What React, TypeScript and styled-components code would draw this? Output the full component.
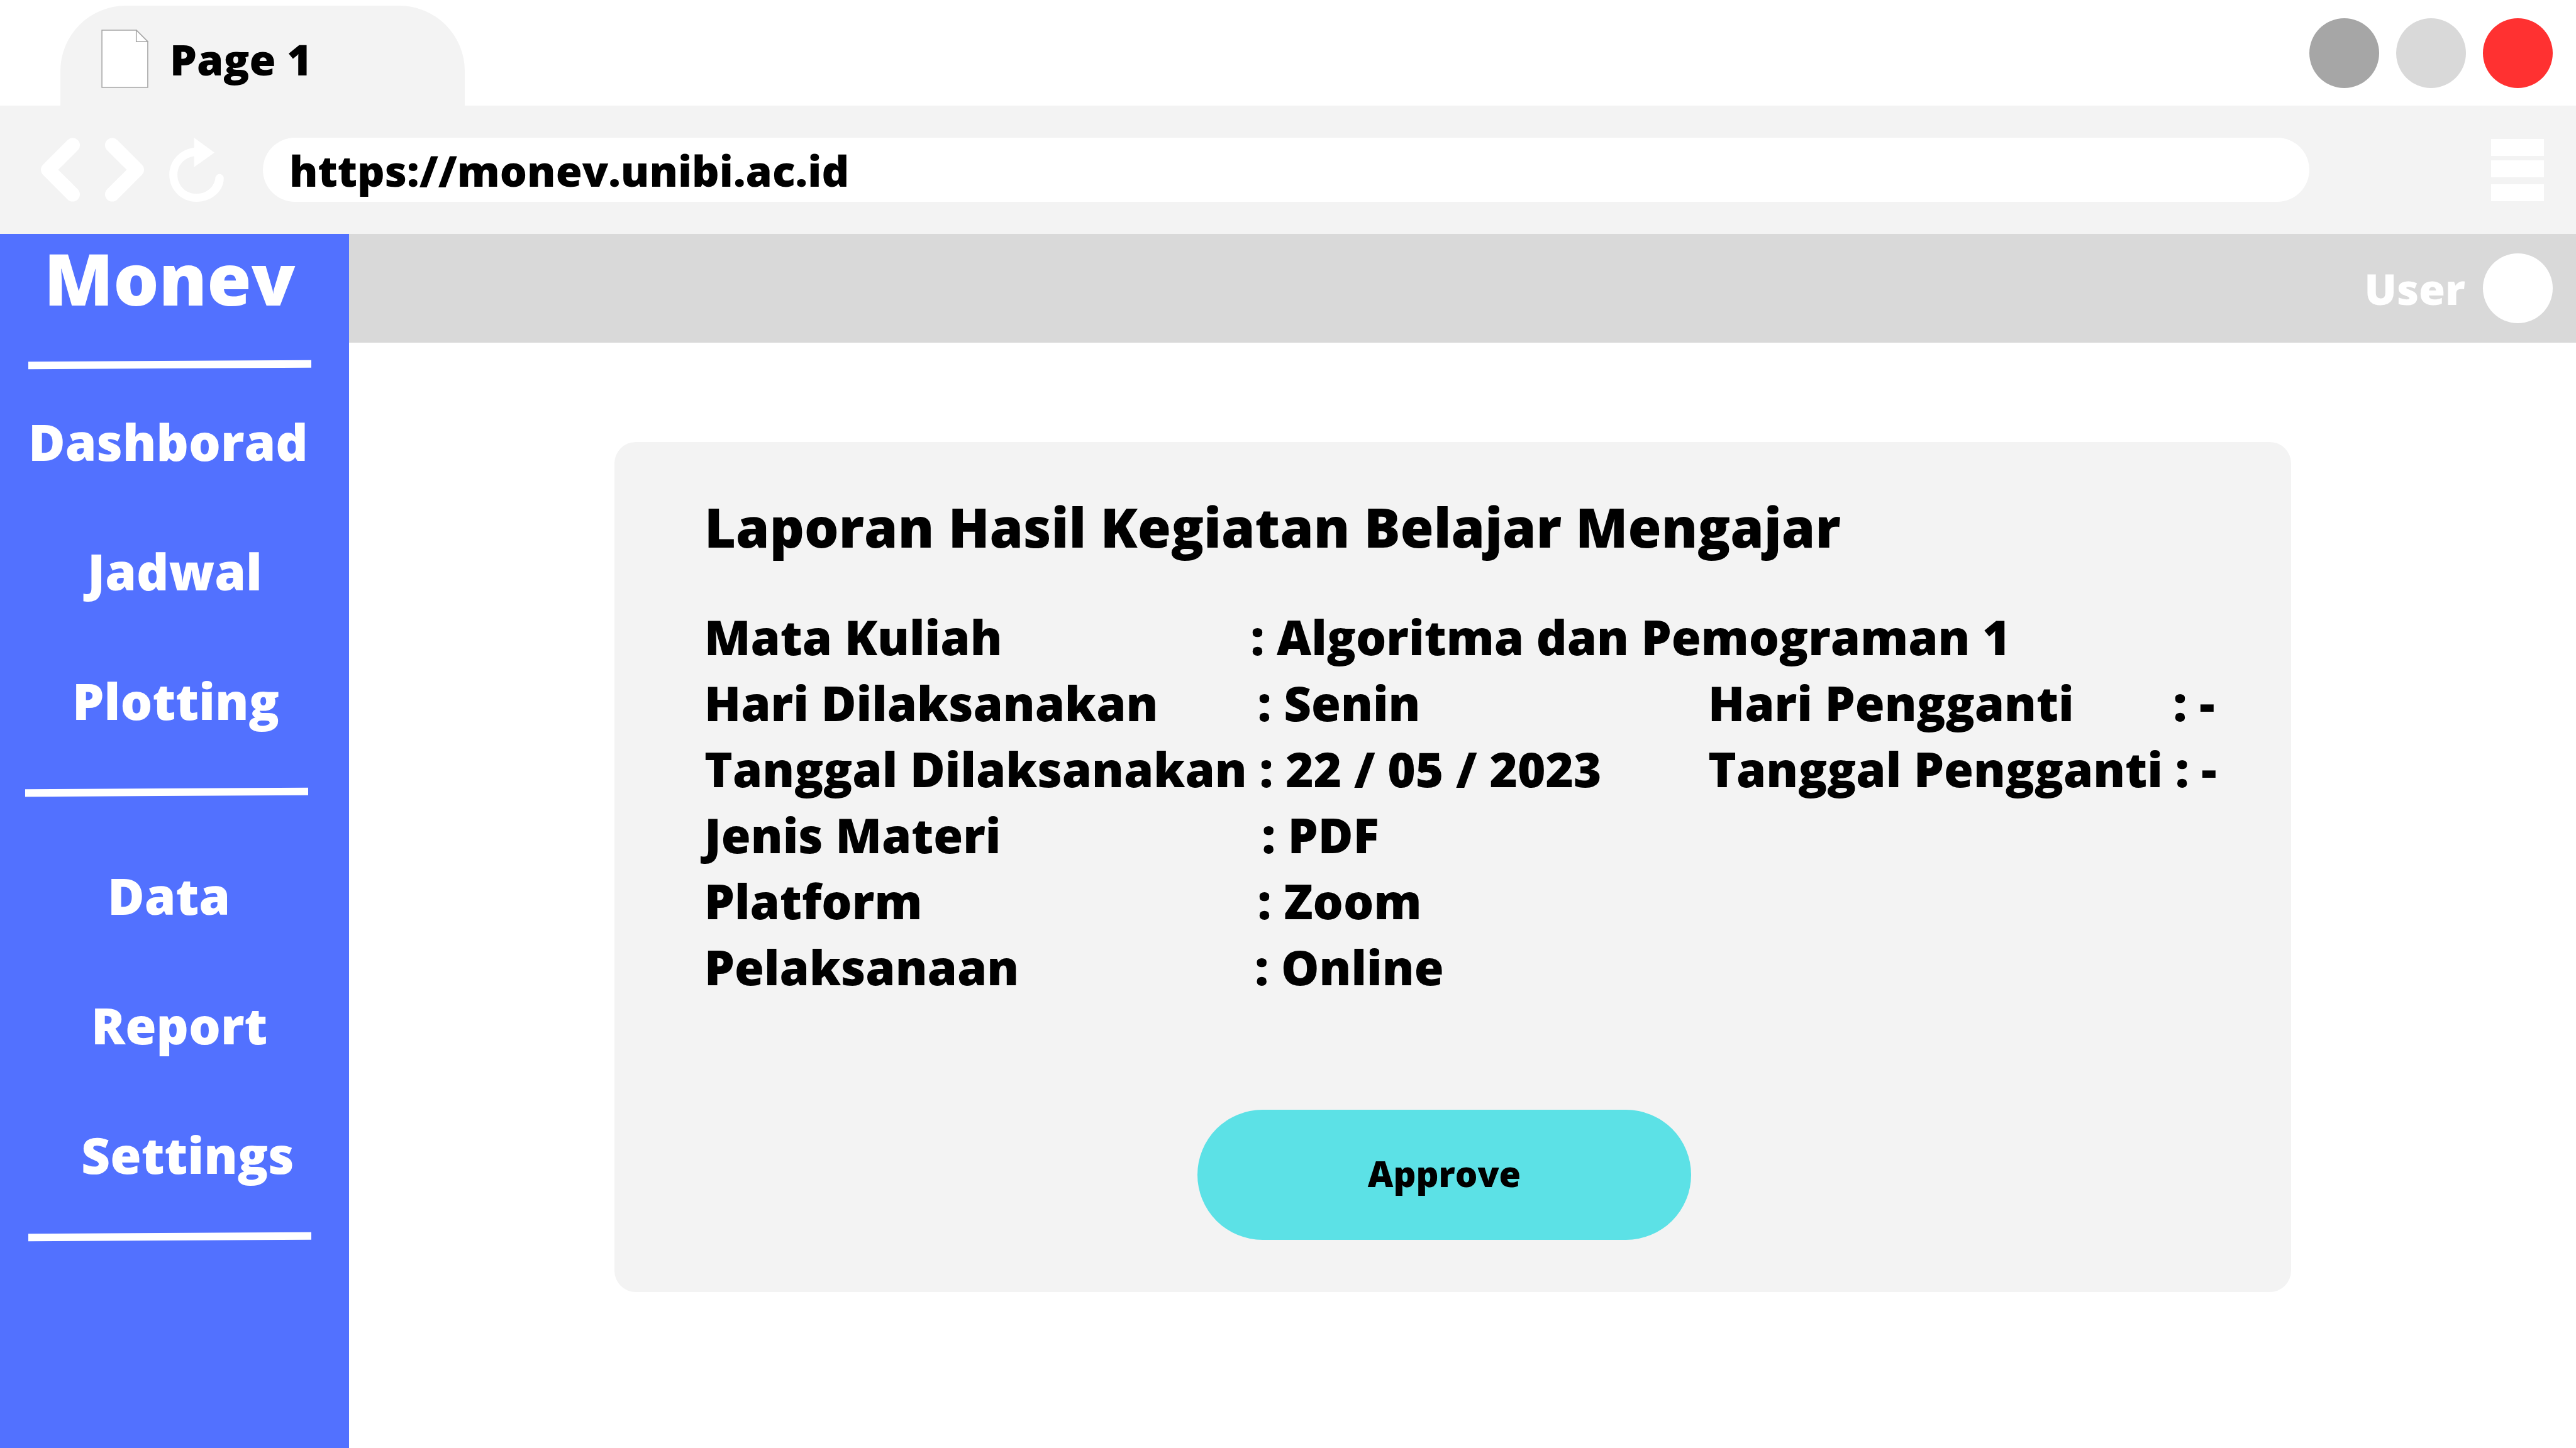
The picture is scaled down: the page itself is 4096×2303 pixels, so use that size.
import React from "react";
import styled, { createGlobalStyle } from "styled-components";

const GlobalStyle = createGlobalStyle`
  *, *::before, *::after { box-sizing: border-box; }
  body {
    margin: 0;
    background: #ffffff;
    font-family: "Open Sans", "Noto Sans", sans-serif;
    font-weight: 800;
    color: #000000;
  }
  button, input { font: inherit; color: inherit; }
`;

const Browser = styled.div`
  display: flex;
  flex-direction: column;
  min-height: 100vh;
`;

const TabStrip = styled.div`
  display: flex;
  justify-content: space-between;
  height: 168px;
  padding: 9px 37px 0 96px;
`;

const Tab = styled.div`
  display: flex;
  align-items: center;
  gap: 34px;
  width: 643px;
  padding: 10px 65px 0;
  border-radius: 104px 104px 0 0;
  background: #f3f3f3;
  font-size: 68px;
  line-height: 96px;
`;

const WindowControls = styled.div`
  display: flex;
  gap: 27px;
  padding-top: 20px;
`;

const WindowDot = styled.button<{ $color: string }>`
  width: 111px;
  height: 111px;
  padding: 0;
  border: 0;
  border-radius: 50%;
  background: ${(p) => p.$color};
`;

const Toolbar = styled.div`
  display: flex;
  align-items: center;
  height: 204px;
  padding: 0 51px 0 65px;
  background: #f3f3f3;
`;

const NavButtons = styled.div`
  display: flex;
  gap: 40px;
  margin-right: 62px;
`;

const IconButton = styled.button`
  display: flex;
  padding: 0;
  border: 0;
  background: none;
`;

const AddressBar = styled.input`
  flex: 1;
  min-width: 0;
  height: 102px;
  margin-right: 289px;
  padding: 0 42px;
  border: 0;
  border-radius: 51px;
  background: #ffffff;
  font-size: 68px;
  line-height: 96px;
`;

const Body = styled.div`
  display: flex;
  flex: 1;
`;

const Sidebar = styled.aside`
  flex: none;
  width: 555px;
  background: #5271ff;
  color: #ffffff;
`;

const Brand = styled.div`
  padding-left: 70px;
  font-size: 114px;
  line-height: 140px;
`;

const Divider = styled.hr<{ $indent: number; $above: number; $below: number }>`
  width: 450px;
  height: 12px;
  margin: ${(p) => p.$above}px 0 ${(p) => p.$below}px ${(p) => p.$indent}px;
  border: 0;
  background: #ffffff;
  transform: rotate(-0.3deg);
`;

const Menu = styled.ul`
  display: flex;
  flex-direction: column;
  gap: 94px;
  margin: 0;
  padding: 0;
  list-style: none;
`;

const MenuItem = styled.li<{ $indent: number }>`
  padding-left: ${(p) => p.$indent}px;
  font-size: 80px;
  line-height: 112px;
`;

const MenuLink = styled.a`
  color: inherit;
  text-decoration: none;
`;

const Content = styled.div`
  flex: 1;
  min-width: 0;
`;

const Header = styled.header`
  display: flex;
  align-items: center;
  justify-content: flex-end;
  gap: 28px;
  height: 173px;
  padding-right: 37px;
  background: #d9d9d9;
  color: #ffffff;
  font-size: 68px;
  line-height: 96px;
`;

const Avatar = styled.span`
  width: 111px;
  height: 111px;
  border-radius: 50%;
  background: #ffffff;
`;

const Main = styled.main`
  padding: 158px 453px 0 422px;
`;

const Card = styled.section`
  padding: 74px 0 83px 143px;
  border-radius: 34px;
  background: #f3f3f3;
`;

const Title = styled.h1`
  margin: 0 0 61px;
  font-size: 86px;
  font-weight: 800;
  line-height: 122px;
`;

const Details = styled.dl`
  margin: 0;
  font-size: 76px;
  line-height: 105px;
  white-space: pre;
`;

const DetailColumns = styled.div`
  display: grid;
  grid-template-columns: 1596px 1fr;
`;

const DetailRow = styled.div`
  display: flex;
`;

const Value = styled.dd`
  margin: 0;
`;

const Actions = styled.div`
  display: flex;
  justify-content: center;
  padding: 175px 170px 0 0;
`;

const ApproveButton = styled.button`
  width: 785px;
  height: 207px;
  padding: 0 0 6px;
  border: 0;
  border-radius: 104px;
  background: #5ce1e6;
  font-size: 56px;
  line-height: 80px;
`;

const PageIcon = () => (
  <svg width="75" height="93" viewBox="0 0 78 97" aria-hidden="true">
    <path d="M1 1H58L77 20V96H1Z" fill="#ffffff" stroke="#a6a6a6" strokeWidth="1.6" />
    <path d="M58 1V20H77Z" fill="#ffffff" stroke="#a6a6a6" strokeWidth="1.6" />
  </svg>
);

const Chevron = ({ points }: { points: string }) => (
  <svg width="62" height="102" viewBox="0 0 65 106" aria-hidden="true">
    <polyline
      points={points}
      fill="none"
      stroke="#ffffff"
      strokeWidth="24"
      strokeLinecap="round"
      strokeLinejoin="round"
    />
  </svg>
);

const ReloadIcon = () => (
  <svg width="87" height="102" viewBox="0 0 90 106" aria-hidden="true">
    <path
      fill="#ffffff"
      d="M41 0L74.6 24.7L41 48.7V30.7C25 33 13.4 45 13.4 61C13.4 79 27 92.7 45 92.7C61 92.7 74 82 76 67A7 7 0 0 1 90 67C90 88 70 106 45 106C20 106 0 86 0 61C0 38 18 19 41 16.3Z"
    />
  </svg>
);

const MenuIcon = () => (
  <svg width="84" height="99" viewBox="0 0 84 99" fill="#ffffff" aria-hidden="true">
    <rect width="84" height="27" />
    <rect y="34" width="84" height="27" />
    <rect y="72" width="84" height="27" />
  </svg>
);

type Detail = { label: string; spaces: number; value: string };

const course: Detail = { label: "Mata Kuliah", spaces: 20, value: "Algoritma dan Pemograman 1" };

const session: Detail[] = [
  { label: "Hari Dilaksanakan", spaces: 8, value: "Senin" },
  { label: "Tanggal Dilaksanakan", spaces: 1, value: "22 / 05 / 2023" },
  { label: "Jenis Materi", spaces: 21, value: "PDF" },
  { label: "Platform", spaces: 27, value: "Zoom" },
  { label: "Pelaksanaan", spaces: 19, value: "Online" },
];

const replacement: Detail[] = [
  { label: "Hari Pengganti", spaces: 8, value: "-" },
  { label: "Tanggal Pengganti", spaces: 1, value: "-" },
];

const mainLinks = [
  { name: "Dashborad", indent: 45 },
  { name: "Jadwal", indent: 139 },
  { name: "Plotting", indent: 115 },
];

const manageLinks = [
  { name: "Data", indent: 171 },
  { name: "Report", indent: 145 },
  { name: "Settings", indent: 129 },
];

const DetailLine = ({ label, spaces, value }: Detail) => (
  <DetailRow>
    <dt>{label + " ".repeat(spaces)}</dt>
    <Value>{": " + value}</Value>
  </DetailRow>
);

const Links = ({ items }: { items: { name: string; indent: number }[] }) => (
  <Menu>
    {items.map((item) => (
      <MenuItem key={item.name} $indent={item.indent}>
        <MenuLink href={"#" + item.name.toLowerCase()}>{item.name}</MenuLink>
      </MenuItem>
    ))}
  </Menu>
);

export default function App() {
  return (
    <Browser>
      <GlobalStyle />
      <TabStrip>
        <Tab>
          <PageIcon />
          <span>Page 1</span>
        </Tab>
        <WindowControls>
          <WindowDot $color="#a6a6a6" aria-label="Minimize" />
          <WindowDot $color="#d9d9d9" aria-label="Maximize" />
          <WindowDot $color="#ff3131" aria-label="Close" />
        </WindowControls>
      </TabStrip>
      <Toolbar>
        <NavButtons>
          <IconButton aria-label="Back">
            <Chevron points="53,12 12,53 53,94" />
          </IconButton>
          <IconButton aria-label="Forward">
            <Chevron points="12,12 53,53 12,94" />
          </IconButton>
          <IconButton aria-label="Reload">
            <ReloadIcon />
          </IconButton>
        </NavButtons>
        <AddressBar type="text" aria-label="Address" defaultValue="https://monev.unibi.ac.id" />
        <IconButton aria-label="Menu">
          <MenuIcon />
        </IconButton>
      </Toolbar>
      <Body>
        <Sidebar>
          <Brand>Monev</Brand>
          <nav>
            <Divider $indent={45} $above={62} $below={60} />
            <Links items={mainLinks} />
            <Divider $indent={40} $above={84} $below={102} />
            <Links items={manageLinks} />
            <Divider $indent={45} $above={69} $below={0} />
          </nav>
        </Sidebar>
        <Content>
          <Header>
            <span>User</span>
            <Avatar />
          </Header>
          <Main>
            <Card>
              <Title>Laporan Hasil Kegiatan Belajar Mengajar</Title>
              <Details>
                <DetailLine {...course} />
              </Details>
              <DetailColumns>
                <Details>
                  {session.map((d) => (
                    <DetailLine key={d.label} {...d} />
                  ))}
                </Details>
                <Details>
                  {replacement.map((d) => (
                    <DetailLine key={d.label} {...d} />
                  ))}
                </Details>
              </DetailColumns>
              <Actions>
                <ApproveButton>Approve</ApproveButton>
              </Actions>
            </Card>
          </Main>
        </Content>
      </Body>
    </Browser>
  );
}
